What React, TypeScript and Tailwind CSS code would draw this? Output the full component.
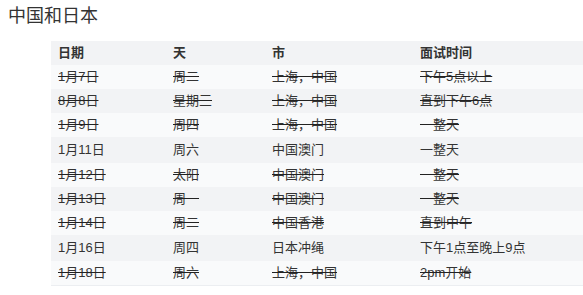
const rows = [
  { date: "1月7日", day: "周二", city: "上海，中国", time: "下午5点以上", done: true },
  { date: "8月8日", day: "星期三", city: "上海，中国", time: "直到下午6点", done: true },
  { date: "1月9日", day: "周四", city: "上海，中国", time: "一整天", done: true },
  { date: "1月11日", day: "周六", city: "中国澳门", time: "一整天", done: false },
  { date: "1月12日", day: "太阳", city: "中国澳门", time: "一整天", done: true },
  { date: "1月13日", day: "周一", city: "中国澳门", time: "一整天", done: true },
  { date: "1月14日", day: "周二", city: "中国香港", time: "直到中午", done: true },
  { date: "1月16日", day: "周四", city: "日本冲绳", time: "下午1点至晚上9点", done: false },
  { date: "1月18日", day: "周六", city: "上海，中国", time: "2pm开始", done: true },
]

export default function App() {
  return (
    <div className="min-h-[295px] bg-white text-[#333] font-['Liberation_Sans','Noto_Sans_CJK_SC',sans-serif]">
      <h2 className="px-2 pt-[4px] text-[18px] leading-[25px] font-normal">中国和日本</h2>
      <table className="ml-[51px] mt-[12px] w-[532px] table-fixed border-collapse text-[13px] leading-[16px]">
        <colgroup>
          <col className="w-[115px]" />
          <col className="w-[99px]" />
          <col className="w-[148px]" />
          <col className="w-[170px]" />
        </colgroup>
        <thead>
          <tr className="h-[24px] bg-[#f2f3f5]">
            <th className="px-[7px] text-left font-bold">日期</th>
            <th className="px-[7px] text-left font-bold">天</th>
            <th className="px-[7px] text-left font-bold">市</th>
            <th className="px-[7px] text-left font-bold">面试时间</th>
          </tr>
        </thead>
        <tbody className="border-b border-[#eceef1]">
          {rows.map((r, i) => (
            <tr
              key={i}
              className={`${r.done ? "h-[24px] line-through decoration-[#222]" : "h-[26px]"} ${
                i % 2 === 0 ? "bg-[#f9fafb]" : "bg-[#f2f3f5]"
              }`}
            >
              <td className="px-[7px]">{r.date}</td>
              <td className="px-[7px]">{r.day}</td>
              <td className="px-[7px]">{r.city}</td>
              <td className="px-[7px]">{r.time}</td>
            </tr>
          ))}
        </tbody>
      </table>
    </div>
  )
}
